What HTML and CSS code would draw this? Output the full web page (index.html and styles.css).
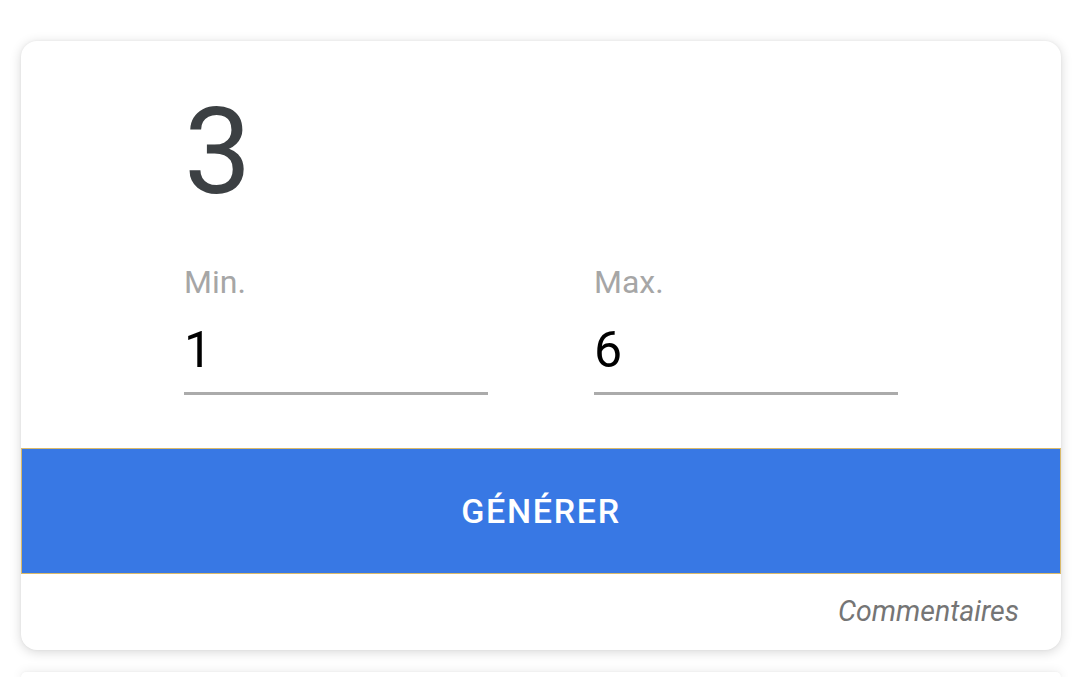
FILE: index.html
```html
<!DOCTYPE html>
<html lang="fr">
<head>
<meta charset="utf-8">
<link rel="stylesheet" href="styles.css">
</head>
<body>
<div class="page">
  <div class="card">
    <div class="body">
      <div class="result">3</div>
      <div class="fields">
        <div class="field">
          <div class="label">Min.</div>
          <div class="value">1</div>
        </div>
        <div class="field">
          <div class="label">Max.</div>
          <div class="value">6</div>
        </div>
      </div>
    </div>
    <div class="button">GÉNÉRER</div>
    <div class="footer"><span class="feedback">Commentaires</span></div>
  </div>
  <div class="card next"></div>
</div>
</body>
</html>
```

FILE: styles.css
```css
html, body {
  margin: 0;
  padding: 0;
  background: #ffffff;
  overflow: hidden;
  height: 677px;
}
.page {
  padding: 41px 19px 0 21px;
  font-family: Roboto, "Noto Sans", sans-serif;
}
.card {
  background: #ffffff;
  border-radius: 16px;
  box-shadow: 0 2px 12px rgba(0, 0, 0, 0.16), 0 0 3px rgba(0, 0, 0, 0.05);
  overflow: hidden;
}
.body {
  padding: 47px 163px 0 163px;
  height: 407px;
  box-sizing: border-box;
}
.result {
  font-size: 120px;
  line-height: 128px;
  color: #3c4043;
  height: 128px;
}
.fields {
  display: flex;
  gap: 106px;
  margin-top: 46px;
}
.field {
  width: 304px;
}
.label {
  font-size: 32px;
  line-height: 40px;
  color: #a6a6a6;
}
.value {
  margin-top: 18px;
  font-size: 50px;
  line-height: 60px;
  color: #000000;
  padding-bottom: 12px;
  border-bottom: 3px solid #ababab;
}
.button {
  height: 126px;
  box-sizing: border-box;
  background: #3878e4;
  border: 1px solid #d9b96a;
  display: flex;
  align-items: center;
  justify-content: center;
  color: #ffffff;
  font-size: 34px;
  font-weight: 500;
  letter-spacing: 0.05em;
}
.footer {
  height: 76px;
  display: flex;
  justify-content: flex-end;
  align-items: flex-start;
  padding: 21px 42px 0 0;
  box-sizing: border-box;
}
.feedback {
  font-size: 28.5px;
  line-height: 34px;
  font-style: italic;
  color: #757575;
}
.next {
  margin-top: 22px;
  height: 5px;
  border-radius: 16px 16px 0 0;
}
```
